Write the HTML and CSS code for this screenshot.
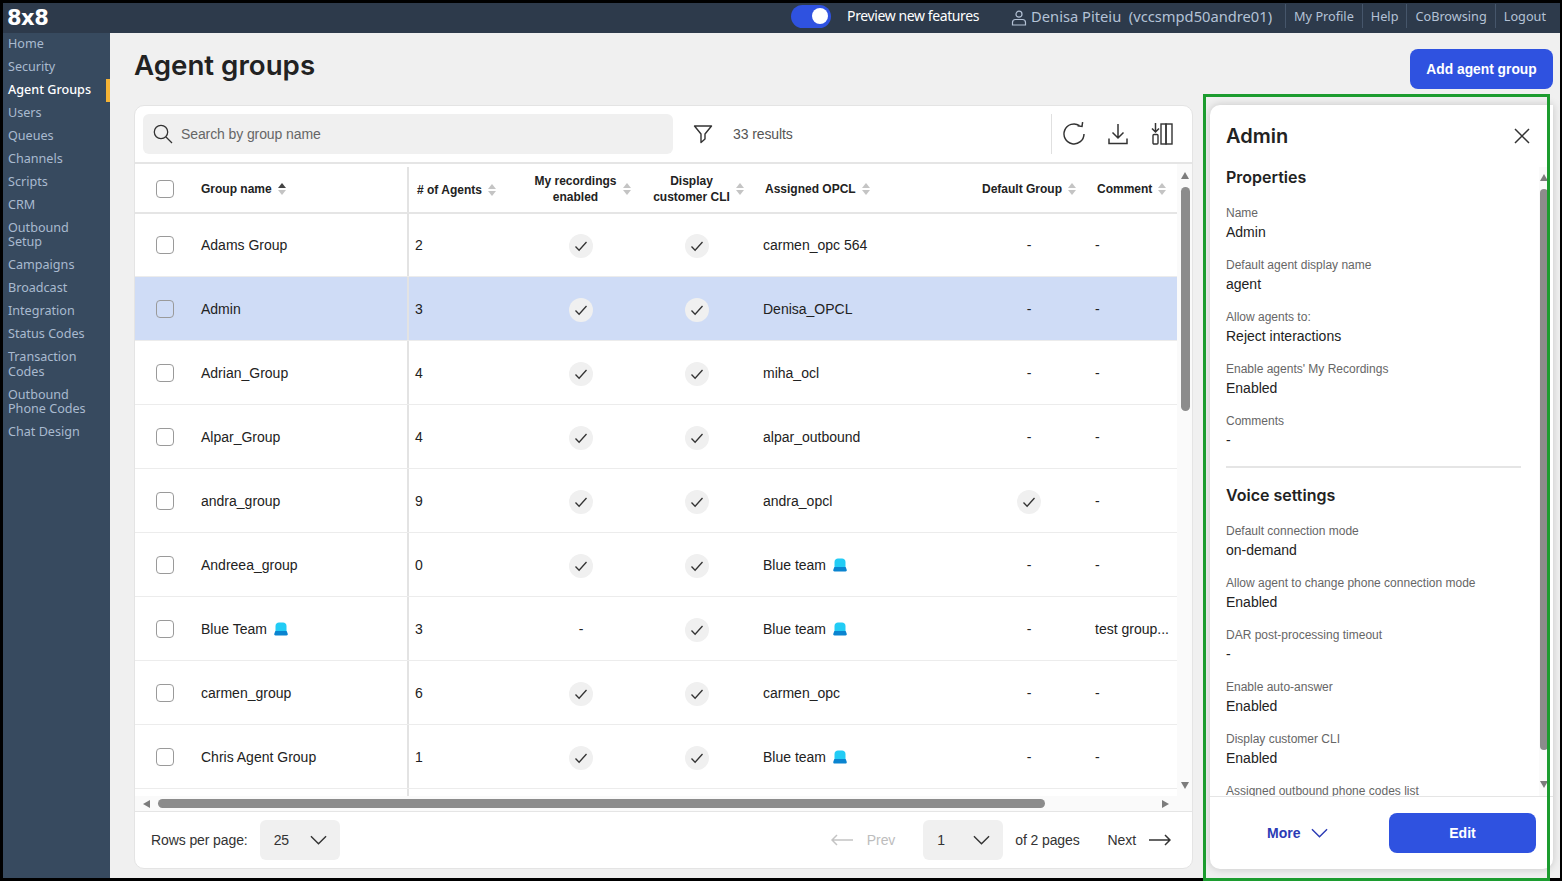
FILE: index.html
```html
<!DOCTYPE html>
<html lang="en">
<head>
<meta charset="utf-8">
<title>Agent groups</title>
<link rel="stylesheet" href="styles.css">
</head>
<body>
<svg class="sprite" width="0" height="0" aria-hidden="true">
  <symbol id="i-check" viewBox="0 0 24 24"><circle cx="12" cy="12" r="12" fill="#f0f0f0"/><path d="M6.5 12.5l3.6 3.8L17.5 8" fill="none" stroke="#333" stroke-width="1.3"/></symbol>
  <symbol id="i-siren" viewBox="0 0 14 14"><path d="M1.5 9V4C1.500 1.800 3 .5 5 .5h4c2 0 3.500 1.300 3.500 3.500v5z" fill="#22ccf5"/><path d="M1.300 9h11.400l1 2.800c.3 .9-.3 1.700-1.200 1.700h-11c-.9 0-1.500-.8-1.200-1.700z" fill="#0a84d0"/></symbol>
  <symbol id="i-chev" viewBox="0 0 18 10"><path d="M1 1l8 8 8-8" fill="none" stroke="currentColor" stroke-width="1.500"/></symbol>
</svg>
<div class="app">
  <header class="topbar">
    <div class="logo">8x8</div>
    <div class="top-right">
      <span class="toggle"><span class="knob"></span></span>
      <span class="preview">Preview new features</span>
      <svg class="user-ic" width="16" height="16" viewBox="0 0 16 16"><circle cx="8" cy="4.200" r="3" fill="none" stroke="#b4c2d6" stroke-width="1.200"/><path d="M1.500 15v-2.500c0-1.800 1.300-3 3-3h7c1.700 0 3 1.200 3 3V15z" fill="none" stroke="#b4c2d6" stroke-width="1.200"/></svg>
      <span class="username">Denisa Piteiu&nbsp; (vccsmpd50andre01)</span>
      <nav class="toplinks">
        <a>My Profile</a><a>Help</a><a>CoBrowsing</a><a>Logout</a>
      </nav>
    </div>
  </header>
  <div class="below">
    <aside class="sidebar">
      <a class="nav">Home</a>
      <a class="nav">Security</a>
      <a class="nav active">Agent Groups</a>
      <a class="nav">Users</a>
      <a class="nav">Queues</a>
      <a class="nav">Channels</a>
      <a class="nav">Scripts</a>
      <a class="nav">CRM</a>
      <a class="nav">Outbound<br>Setup</a>
      <a class="nav">Campaigns</a>
      <a class="nav">Broadcast</a>
      <a class="nav">Integration</a>
      <a class="nav">Status Codes</a>
      <a class="nav">Transaction<br>Codes</a>
      <a class="nav">Outbound<br>Phone Codes</a>
      <a class="nav">Chat Design</a>
    </aside>
    <main class="content">
      <div class="page-head">
        <h1>Agent groups</h1>
        <button class="btn add">Add agent group</button>
      </div>
      <div class="columns">
        <section class="card">
          <div class="toolbar">
            <div class="search">
              <svg width="20" height="20" viewBox="0 0 20 20"><circle cx="8" cy="8" r="6.700" fill="none" stroke="#333" stroke-width="1.300"/><path d="M13 13l6 6" stroke="#333" stroke-width="1.300"/></svg>
              <span>Search by group name</span>
            </div>
            <svg class="filter" width="20" height="20" viewBox="0 0 20 20"><path d="M1.500 2h17l-6.500 8v5l-4 3.500V10z" fill="none" stroke="#333" stroke-width="1.400" stroke-linejoin="round"/></svg>
            <span class="results">33 results</span>
            <div class="tools">
              <svg width="24" height="24" viewBox="0 0 24 24"><path d="M17.500 3.600A10 10 0 1 0 22 12" fill="none" stroke="#333" stroke-width="1.500"/><path d="M18 .5v4.500h-4.500" fill="none" stroke="#333" stroke-width="1.500" transform="translate(2 -0.500) rotate(8 18 5)"/></svg>
              <svg width="20" height="22" viewBox="0 0 20 22"><path d="M10 1v14M4.500 9.500l5.500 5.500 5.500-5.500M1 15.500v5h18v-5" fill="none" stroke="#333" stroke-width="1.500"/></svg>
              <svg class="tool-cols" width="22" height="22" viewBox="0 0 22 22"><path d="M4.500 0v9M1 5.500l3.500 3.500 3.500-3.500" fill="none" stroke="#333" stroke-width="1.500"/><rect x="2" y="11.500" width="5" height="9.500" rx="1" fill="none" stroke="#333" stroke-width="1.400"/><rect x="10" y="1" width="5" height="20" fill="none" stroke="#333" stroke-width="1.400"/><rect x="15" y="1" width="6" height="20" fill="none" stroke="#333" stroke-width="1.400"/></svg>
            </div>
          </div>
          <div class="table-area">
            <div class="table">
              <div class="row head">
                <div class="c-check"><span class="cb"></span></div>
                <div class="c-name"><span>Group name</span><span class="sort asc"></span></div>
                <div class="c-agents"><span>#&nbsp;of Agents</span><span class="sort"></span></div>
                <div class="c-mid c-wrap"><span>My recordings<br>enabled</span><span class="sort"></span></div>
                <div class="c-mid c-wrap"><span>Display<br>customer CLI</span><span class="sort"></span></div>
                <div class="c-opcl"><span>Assigned OPCL</span><span class="sort"></span></div>
                <div class="c-mid"><span>Default Group</span><span class="sort"></span></div>
                <div class="c-comment"><span>Comment</span><span class="sort"></span></div>
              </div>
              <div class="tbody">
                <div class="row">
                  <div class="c-check"><span class="cb"></span></div><div class="c-name">Adams Group</div><div class="c-agents">2</div>
                  <div class="c-mid"><svg class="ok"><use href="#i-check"/></svg></div><div class="c-mid"><svg class="ok"><use href="#i-check"/></svg></div>
                  <div class="c-opcl">carmen_opc 564</div><div class="c-mid">-</div><div class="c-comment">-</div>
                </div>
                <div class="row selected">
                  <div class="c-check"><span class="cb"></span></div><div class="c-name">Admin</div><div class="c-agents">3</div>
                  <div class="c-mid"><svg class="ok"><use href="#i-check"/></svg></div><div class="c-mid"><svg class="ok"><use href="#i-check"/></svg></div>
                  <div class="c-opcl">Denisa_OPCL</div><div class="c-mid">-</div><div class="c-comment">-</div>
                </div>
                <div class="row">
                  <div class="c-check"><span class="cb"></span></div><div class="c-name">Adrian_Group</div><div class="c-agents">4</div>
                  <div class="c-mid"><svg class="ok"><use href="#i-check"/></svg></div><div class="c-mid"><svg class="ok"><use href="#i-check"/></svg></div>
                  <div class="c-opcl">miha_ocl</div><div class="c-mid">-</div><div class="c-comment">-</div>
                </div>
                <div class="row">
                  <div class="c-check"><span class="cb"></span></div><div class="c-name">Alpar_Group</div><div class="c-agents">4</div>
                  <div class="c-mid"><svg class="ok"><use href="#i-check"/></svg></div><div class="c-mid"><svg class="ok"><use href="#i-check"/></svg></div>
                  <div class="c-opcl">alpar_outbound</div><div class="c-mid">-</div><div class="c-comment">-</div>
                </div>
                <div class="row">
                  <div class="c-check"><span class="cb"></span></div><div class="c-name">andra_group</div><div class="c-agents">9</div>
                  <div class="c-mid"><svg class="ok"><use href="#i-check"/></svg></div><div class="c-mid"><svg class="ok"><use href="#i-check"/></svg></div>
                  <div class="c-opcl">andra_opcl</div><div class="c-mid"><svg class="ok"><use href="#i-check"/></svg></div><div class="c-comment">-</div>
                </div>
                <div class="row">
                  <div class="c-check"><span class="cb"></span></div><div class="c-name">Andreea_group</div><div class="c-agents">0</div>
                  <div class="c-mid"><svg class="ok"><use href="#i-check"/></svg></div><div class="c-mid"><svg class="ok"><use href="#i-check"/></svg></div>
                  <div class="c-opcl">Blue team<svg class="siren"><use href="#i-siren"/></svg></div><div class="c-mid">-</div><div class="c-comment">-</div>
                </div>
                <div class="row">
                  <div class="c-check"><span class="cb"></span></div><div class="c-name">Blue Team<svg class="siren"><use href="#i-siren"/></svg></div><div class="c-agents">3</div>
                  <div class="c-mid">-</div><div class="c-mid"><svg class="ok"><use href="#i-check"/></svg></div>
                  <div class="c-opcl">Blue team<svg class="siren"><use href="#i-siren"/></svg></div><div class="c-mid">-</div><div class="c-comment"><span class="trunc">test group...</span></div>
                </div>
                <div class="row">
                  <div class="c-check"><span class="cb"></span></div><div class="c-name">carmen_group</div><div class="c-agents">6</div>
                  <div class="c-mid"><svg class="ok"><use href="#i-check"/></svg></div><div class="c-mid"><svg class="ok"><use href="#i-check"/></svg></div>
                  <div class="c-opcl">carmen_opc</div><div class="c-mid">-</div><div class="c-comment">-</div>
                </div>
                <div class="row">
                  <div class="c-check"><span class="cb"></span></div><div class="c-name">Chris Agent Group</div><div class="c-agents">1</div>
                  <div class="c-mid"><svg class="ok"><use href="#i-check"/></svg></div><div class="c-mid"><svg class="ok"><use href="#i-check"/></svg></div>
                  <div class="c-opcl">Blue team<svg class="siren"><use href="#i-siren"/></svg></div><div class="c-mid">-</div><div class="c-comment">-</div>
                </div>
                <div class="row">
                  <div class="c-check"></div><div class="c-name"></div><div class="c-agents"></div><div class="c-mid"></div><div class="c-mid"></div><div class="c-opcl"></div><div class="c-mid"></div><div class="c-comment"></div>
                </div>
              </div>
            </div>
            <div class="vscroll">
              <span class="arrow up"></span>
              <span class="vthumb"></span>
              <span class="arrow down"></span>
            </div>
          </div>
          <div class="hscroll">
            <span class="arrow left"></span>
            <span class="hthumb"></span>
            <span class="arrow right"></span>
          </div>
          <footer class="pager">
            <span>Rows per page:</span>
            <div class="select s-rows"><span>25</span><svg class="chev"><use href="#i-chev"/></svg></div>
            <div class="pager-right">
              <svg class="arr dim" width="22" height="12" viewBox="0 0 22 12"><path d="M22 6H1M6 1L1 6l5 5" fill="none" stroke="currentColor" stroke-width="1.500"/></svg>
              <span class="prev">Prev</span>
              <div class="select s-page"><span>1</span><svg class="chev"><use href="#i-chev"/></svg></div>
              <span class="of">of 2 pages</span>
              <span class="next">Next</span>
              <svg class="arr" width="22" height="12" viewBox="0 0 22 12"><path d="M0 6h21M16 1l5 5-5 5" fill="none" stroke="currentColor" stroke-width="1.500"/></svg>
            </div>
          </footer>
        </section>
        <aside class="panel">
          <div class="panel-head">
            <h2>Admin</h2>
            <svg width="16" height="16" viewBox="0 0 16 16"><path d="M1 1l14 14M15 1L1 15" stroke="#333" stroke-width="1.500"/></svg>
          </div>
          <div class="panel-body">
            <div class="panel-scrollarea">
              <h3>Properties</h3>
              <div class="field"><label>Name</label><p>Admin</p></div>
              <div class="field"><label>Default agent display name</label><p>agent</p></div>
              <div class="field"><label>Allow agents to:</label><p>Reject interactions</p></div>
              <div class="field"><label>Enable agents' My Recordings</label><p>Enabled</p></div>
              <div class="field"><label>Comments</label><p>-</p></div>
              <hr>
              <h3>Voice settings</h3>
              <div class="field"><label>Default connection mode</label><p>on-demand</p></div>
              <div class="field"><label>Allow agent to change phone connection mode</label><p>Enabled</p></div>
              <div class="field"><label>DAR post-processing timeout</label><p>-</p></div>
              <div class="field"><label>Enable auto-answer</label><p>Enabled</p></div>
              <div class="field"><label>Display customer CLI</label><p>Enabled</p></div>
              <div class="field"><label>Assigned outbound phone codes list</label><p>-</p></div>
            </div>
            <div class="vscroll panel-v">
              <span class="arrow up"></span>
              <span class="vthumb"></span>
              <span class="arrow down"></span>
            </div>
          </div>
          <div class="panel-foot">
            <span class="more">More<svg class="chev"><use href="#i-chev"/></svg></span>
            <button class="btn edit">Edit</button>
          </div>
        </aside>
      </div>
    </main>
  </div>
  <div class="green-frame"></div>
</div>
</body>
</html>
```
FILE: styles.css
```css
* { box-sizing: border-box; }
html, body { margin: 0; padding: 0; height: 100%; overflow: hidden; }
body { background: #000; font-family: "Liberation Sans", Arial, sans-serif; font-size: 14px; color: #222; }
.sprite { position: absolute; }
.app { position: relative; width: 1562px; height: 881px; padding: 3px 2px 3px 3px; display: flex; flex-direction: column; }

.topbar { height: 30px; flex: none; background: #2d3a4b; display: flex; align-items: center; justify-content: space-between; padding-left: 4px; }
.logo { font-family: "DejaVu Sans", sans-serif; font-weight: 700; font-size: 21px; color: #fff; line-height: 28px; letter-spacing: -0.5px; }
.top-right { display: flex; align-items: center; height: 100%; }
.toggle { width: 40px; height: 23px; border-radius: 12px; background: #2f52e0; display: flex; align-items: center; justify-content: flex-end; padding-right: 3px; margin-bottom: 4px; }
.knob { width: 16px; height: 16px; border-radius: 50%; background: #fff; }
.preview { margin-left: 16px; color: #fff; font-family: "Noto Sans", sans-serif; font-size: 14px; letter-spacing: -0.4px; width: 164px; margin-bottom: 6px; }
.user-ic { margin-right: 4px; margin-bottom: 1px; }
.username { font-family: "Noto Sans", sans-serif; color: #b4c2d6; font-size: 14.700px; width: 254px; white-space: nowrap; margin-bottom: 4px; }
.toplinks { display: flex; height: 24px; align-items: center; margin-bottom: 4px; }
.toplinks a { font-family: "Noto Sans", sans-serif; font-size: 12.700px; color: #b4c2d6; padding: 0 8px; border-left: 1px solid #46566b; line-height: 24px; white-space: nowrap; }
.toplinks a:last-child { padding-right: 14px; }

.below { flex: 1; display: flex; min-height: 0; }
.sidebar { width: 107px; flex: none; background: #374a5f; display: flex; flex-direction: column; }
.nav { font-family: "Noto Sans", sans-serif; font-size: 12.600px; line-height: 14.500px; padding: 3.500px 5px 5px; color: #a9bacf; }
.nav.active { color: #fff; font-weight: 500; border-right: 4px solid #f5b335; padding-right: 0; white-space: nowrap; }

.content { flex: 1; background: #f0f0f0; min-width: 0; padding: 0 7px 0 24px; display: flex; flex-direction: column; }
.page-head { height: 72px; flex: none; display: flex; justify-content: space-between; align-items: flex-start; }
h1 { margin: 15px 0 0; font-family: Inter, sans-serif; font-weight: 600; font-size: 27.700px; line-height: 34px; color: #222; }
.btn { border: 0; background: #2f52e0; color: #fff; font-family: "Liberation Sans", sans-serif; font-weight: 700; font-size: 14px; border-radius: 8px; }
.add { width: 143px; height: 40px; margin-top: 16px; font-size: 13.800px; }

.columns { flex: 1; min-height: 0; display: flex; gap: 17px; padding-bottom: 9px; }
.card { width: 1059px; flex: none; background: #fff; border: 1px solid #e4e4e4; border-radius: 10px; display: flex; flex-direction: column; overflow: hidden; }

.toolbar { height: 58px; flex: none; border-bottom: 2px solid #e5e5e5; display: flex; align-items: center; padding: 0 8px; }
.search { width: 530px; height: 40px; border-radius: 6px; background: #f0f0f0; display: flex; align-items: center; padding-left: 10px; gap: 8px; color: #666; letter-spacing: -.1px; }
.filter { margin-left: 20px; }
.results { margin-left: 20px; color: #555; letter-spacing: -.1px; }
.tools { margin-left: auto; height: 40px; border-left: 1px solid #e0e0e0; display: flex; align-items: center; gap: 22px; padding-left: 10px; margin-right: 11px; }
.tool-cols { margin-left: 1px; }

.table-area { flex: 1; min-height: 0; display: flex; }
.table { width: 1042px; flex: none; display: flex; flex-direction: column; }
.tbody { flex: 1; min-height: 0; overflow: hidden; margin-top: -1px; }
.row { display: grid; grid-template-columns: 66px 206px 116px 116px 116px 216px 116px 90px; height: 64px; border-bottom: 1px solid #ececec; align-items: stretch; }
.row > div { display: flex; align-items: center; min-width: 0; }
.row.head { height: 50px; flex: none; padding-top: 2px; border-bottom: 2px solid #e5e5e5; font-size: 12px; font-weight: 700; line-height: 16px; color: #222; }
.row.selected { background: #cfdcf6; }
.c-check { padding-left: 21px; }
.c-agents { border-left: 2px solid #e3e3e3; padding-left: 6px; }
.head .c-agents { padding-left: 8px; margin: 1px 0 0; }
.c-mid { justify-content: center; text-align: center; }
.head .c-wrap { padding-left: 3px; }
.c-opcl { padding-left: 8px; }
.head .c-opcl { padding-left: 10px; }
.c-comment { padding-left: 8px; }
.head .c-comment { padding-left: 10px; }
.cb { width: 18px; height: 18px; border: 1.500px solid #9a9a9a; border-radius: 4px; background: transparent; display: block; }
.sort { display: inline-flex; flex-direction: column; gap: 2px; margin-left: 6px; }
.sort::before { content: ""; border: 4.500px solid transparent; border-top: 0; border-bottom: 5px solid #c4c4c4; }
.sort::after { content: ""; border: 4.500px solid transparent; border-bottom: 0; border-top: 5px solid #c4c4c4; }
.sort.asc::before { border-bottom-color: #444; }
.ok { width: 24px; height: 24px; display: block; margin-top: 2px; }
.siren { width: 14px; height: 14px; margin-left: 7px; display: block; }
.trunc { white-space: nowrap; }

.vscroll { width: 16px; flex: none; background: #fafafa; display: flex; flex-direction: column; align-items: center; padding: 8px 0 7px; }
.vthumb { width: 9px; height: 224px; margin-top: 8px; background: #8c8c8c; border-radius: 5px; }
.arrow { display: block; width: 0; height: 0; border: 4.500px solid transparent; }
.arrow.up { border-top: 0; border-bottom: 7px solid #7c7c7c; }
.arrow.down { border-bottom: 0; border-top: 7px solid #7c7c7c; margin-top: auto; }
.arrow.left { border-left: 0; border-right: 7px solid #7c7c7c; }
.arrow.right { border-right: 0; border-left: 7px solid #7c7c7c; }
.hscroll { height: 16px; flex: none; background: #fafafa; border-bottom: 1px solid #e5e5e5; display: flex; align-items: center; padding: 0 23px 0 8px; }
.hthumb { width: 887px; height: 9px; margin-left: 8px; background: #8c8c8c; border-radius: 5px; }
.hscroll .right { margin-left: auto; }

.pager { height: 56px; flex: none; display: flex; align-items: center; padding: 0 21px 0 16px; color: #333; letter-spacing: -.1px; }
.select { width: 80px; height: 40px; border-radius: 6px; background: #f0f0f0; display: flex; align-items: center; justify-content: space-between; padding: 0 13px 0 14px; }
.s-rows { margin-left: 12px; }
.chev { width: 17px; height: 10px; display: block; color: #333; }
.pager-right { margin-left: auto; display: flex; align-items: center; }
.arr { color: #333; display: block; }
.arr.dim { color: #c4c4c4; }
.prev { color: #bdbdbd; margin-left: 14px; margin-right: 28px; }
.of { margin-left: 12px; margin-right: 28px; }
.next { margin-right: 13px; }

.panel { width: 343px; flex: none; background: #fff; border-radius: 10px 0 10px 10px; box-shadow: 0 0 8px rgba(0,0,0,.18); display: flex; flex-direction: column; overflow: hidden; }
.panel-head { height: 62px; flex: none; display: flex; align-items: center; justify-content: space-between; padding: 0 23px 0 16px; }
h2 { margin: 0; font-family: Inter, sans-serif; font-weight: 600; font-size: 20px; color: #222; }
.panel-body { flex: 1; min-height: 0; display: flex; }
.panel-scrollarea { flex: 1; min-width: 0; overflow: hidden; padding: 0 18px 0 16px; }
h3 { margin: 0; font-family: Inter, sans-serif; font-weight: 600; font-size: 16px; line-height: 20px; color: #222; }
.panel-scrollarea h3 + .field { margin-top: 19px; }
.field { height: 52px; }
.field label { display: block; font-size: 12px; line-height: 14px; color: #666; }
.field p { margin: 4px 0 0; font-size: 14px; line-height: 17px; color: #222; }
hr { border: 0; border-top: 2px solid #e5e5e5; margin: 0 0 17px; }
.panel-v { width: 10px; margin-right: 4px; background: #fafafa; padding: 7px 0 8px; }
.panel-v .vthumb { width: 8px; height: 561px; margin-top: 8px; }
.panel-foot { height: 73px; flex: none; border-top: 1px solid #e5e5e5; display: flex; align-items: center; padding: 0 17px 0 57px; justify-content: space-between; }
.more { display: flex; align-items: center; gap: 11px; color: #2b3bb5; font-weight: 700; }
.more .chev { color: #2b3bb5; }
.edit { width: 147px; height: 40px; }

.green-frame { position: absolute; left: 1203px; top: 94px; width: 347px; height: 787px; border: 3px solid #1c9c2f; pointer-events: none; }
```
